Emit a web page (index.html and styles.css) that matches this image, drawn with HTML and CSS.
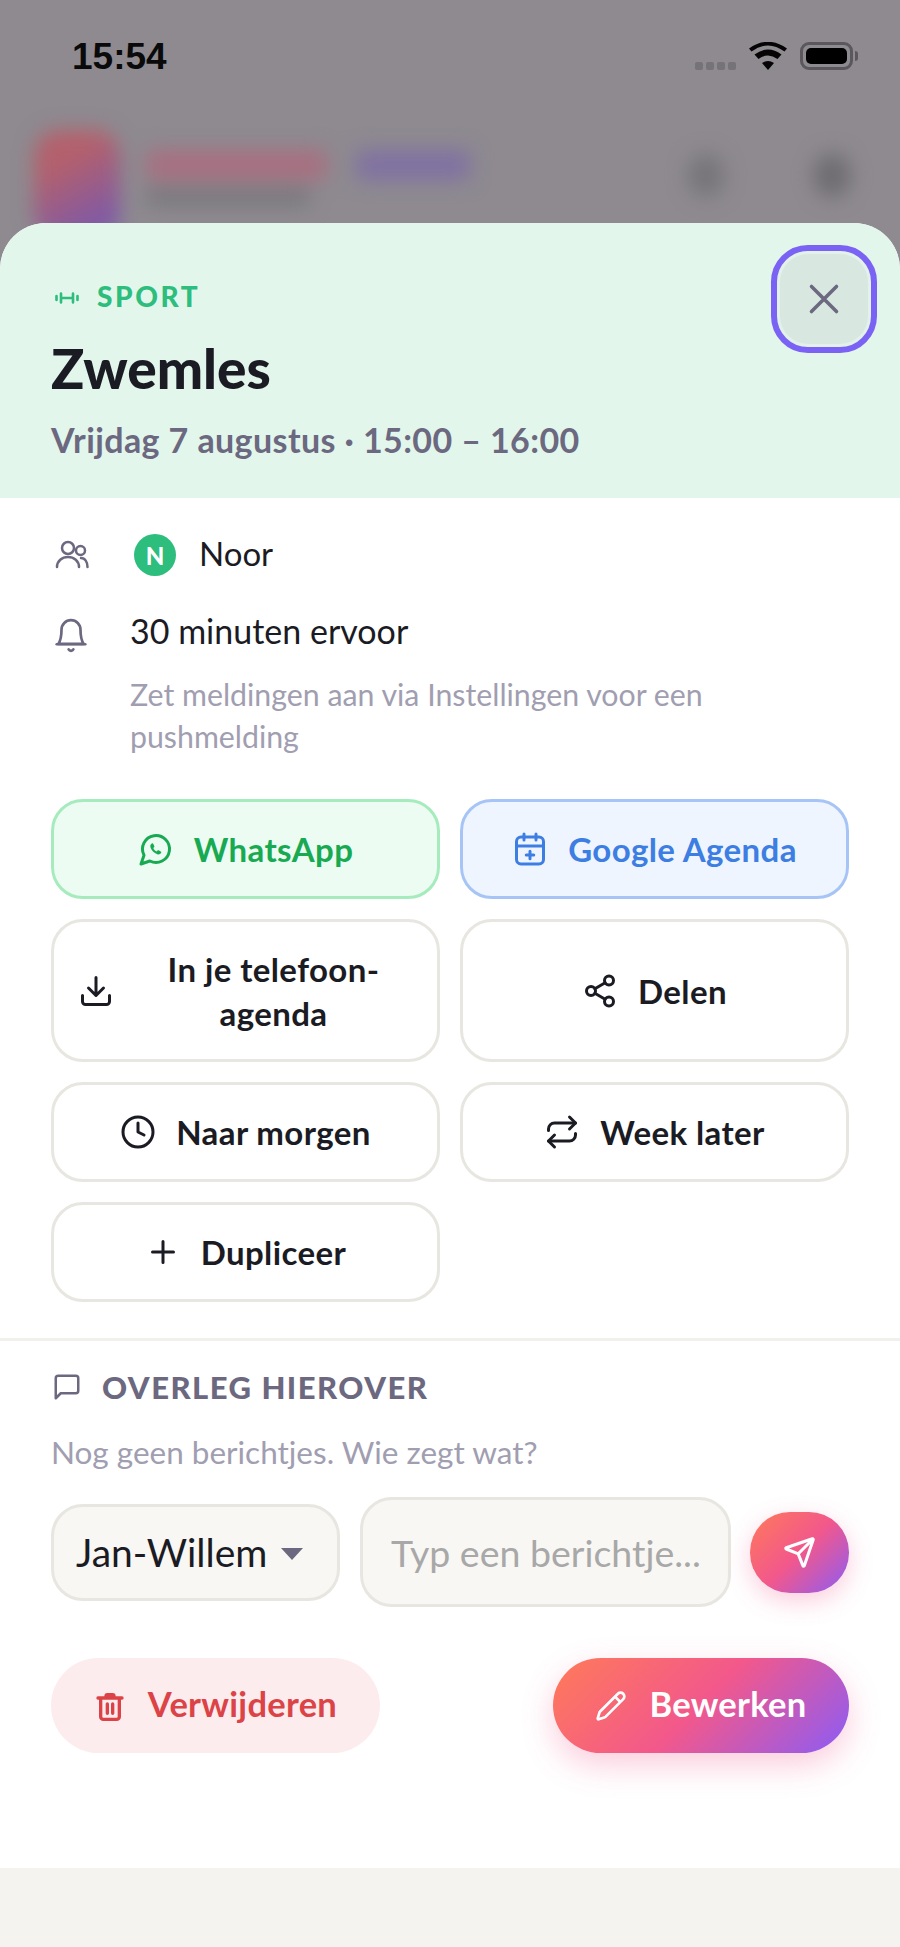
FILE: index.html
```html
<!DOCTYPE html>
<html lang="nl">
<head>
<meta charset="utf-8">
<title>Zwemles</title>
<link rel="stylesheet" href="styles.css">
</head>
<body>
<div class="backdrop">
  <div class="status">
    <span class="time">15:54</span>
    <div class="status-icons">
      <div class="dots"><i></i><i></i><i></i><i></i></div>
      <svg class="wifi" viewBox="0 0 38 28"><path d="M19 28l-6-7q6-4 12 0zM9.500 17l-4-4.500q13.500-10 27 0l-4 4.500q-9.500-7-19 0zM2.500 9.500L0 6.500Q19-7 38 6.500l-2.500 3Q19-2.500 2.500 9.500z"/></svg>
      <div class="battery"><div class="battery-fill"></div></div>
    </div>
  </div>
  <div class="blurred">
    <div class="logo"></div>
    <div class="brand">
      <div class="brand-name"><span class="bn-a"></span><span class="bn-b"></span></div>
      <div class="brand-sub"></div>
    </div>
    <div class="ghost g1"></div>
    <div class="ghost g2"></div>
  </div>
</div>
<main class="sheet">
  <header class="head">
    <div class="cat">
      <svg class="ic cat-ic" viewBox="0 0 24 12"><path d="M1.500 4v4M6 1.500v9M18 1.500v9M22.500 4v4M6 6h12"/></svg>
      <span>SPORT</span>
    </div>
    <h1>Zwemles</h1>
    <p class="when">Vrijdag 7 augustus · 15:00 – 16:00</p>
    <button class="close"><svg class="ic" viewBox="0 0 24 24"><path d="M18 6 6 18M6 6l12 12"/></svg></button>
  </header>
  <section class="info">
    <div class="row">
      <svg class="ic row-ic" viewBox="0 0 34 30"><circle cx="13" cy="8" r="6"/><circle cx="25.500" cy="10.500" r="4.500"/><path d="M2 27c0-6 5-10 11-10s11 4 11 10"/><path d="M26 18c4 0 6.500 4 6.500 9"/></svg>
      <span class="avatar">N</span>
      <span class="val">Noor</span>
    </div>
    <div class="row row-bell">
      <svg class="ic bell-ic" viewBox="0 0 24 24"><path d="M6 8a6 6 0 0 1 12 0c0 5.500 1 7.500 2 9H4c1-1.500 2-3.500 2-9"/><path d="M3 17.200h18"/><path d="M10.500 20.500a1.700 1.700 0 0 0 3 0"/></svg>
      <span class="val">30 minuten ervoor</span>
    </div>
    <p class="note">Zet meldingen aan via Instellingen voor een pushmelding</p>
  </section>
  <section class="grid">
    <button class="btn wa"><svg class="ic" viewBox="0 0 24 24"><path d="M7.900 20A9 9 0 1 0 4 16.100L2 22Z"/><path class="solid" d="M9 8.500c-.7.5-1 1.300-.7 2.300.6 2 2.400 3.900 4.600 4.700 1 .3 1.900 0 2.500-.8.300-.5.100-.9-.3-1.100l-1.300-.7c-.4-.2-.7-.1-.9.200l-.4.500c-.9-.3-1.900-1.200-2.300-2.300l.5-.5c.3-.3.3-.6.1-1l-.6-1.200c-.2-.5-.7-.5-1.200-.1z"/></svg><span>WhatsApp</span></button>
    <button class="btn ga"><svg class="ic" viewBox="0 0 24 24"><rect x="3" y="4" width="18" height="18" rx="3"/><path d="M16 2v4M8 2v4M3 10h18M12 13.500v5M9.500 16h5"/></svg><span>Google Agenda</span></button>
    <button class="btn tall"><svg class="ic" viewBox="0 0 24 24"><path d="M21 15v4a2 2 0 0 1-2 2H5a2 2 0 0 1-2-2v-4M7 10l5 5 5-5M12 15V3"/></svg><span class="wrap">In je telefoon-agenda</span></button>
    <button class="btn"><svg class="ic" viewBox="0 0 24 24"><circle cx="18" cy="5" r="3"/><circle cx="6" cy="12" r="3"/><circle cx="18" cy="19" r="3"/><path d="m8.590 13.510 6.830 3.980M15.410 6.510l-6.820 3.980"/></svg><span>Delen</span></button>
    <button class="btn"><svg class="ic" viewBox="0 0 24 24"><circle cx="12" cy="12" r="10"/><path d="M12 6v6l4 2"/></svg><span>Naar morgen</span></button>
    <button class="btn"><svg class="ic" viewBox="0 0 24 24"><path d="m17 2 4 4-4 4"/><path d="M3 11v-1a4 4 0 0 1 4-4h14"/><path d="m7 22-4-4 4-4"/><path d="M21 13v1a4 4 0 0 1-4 4H3"/></svg><span>Week later</span></button>
    <button class="btn"><svg class="ic" viewBox="0 0 24 24"><path d="M5 12h14M12 5v14"/></svg><span>Dupliceer</span></button>
  </section>
  <section class="chat">
    <h2><svg class="ic" viewBox="0 0 24 24"><path d="M21 15a2 2 0 0 1-2 2H7l-4 4V5a2 2 0 0 1 2-2h14a2 2 0 0 1 2 2z"/></svg>OVERLEG HIEROVER</h2>
    <p class="empty">Nog geen berichtjes. Wie zegt wat?</p>
    <div class="compose">
      <div class="select"><span>Jan-Willem</span><i class="caret"></i></div>
      <div class="input">Typ een berichtje...</div>
      <button class="send"><svg class="ic" viewBox="0 0 24 24"><path d="M14.536 21.686a.5.5 0 0 0 .937-.024l6.500-19a.496.496 0 0 0-.635-.635l-19 6.500a.5.5 0 0 0-.024.937l7.930 3.180a2 2 0 0 1 1.112 1.110zM21.854 2.147l-10.940 10.939"/></svg></button>
    </div>
  </section>
  <section class="actions">
    <button class="pill del"><svg class="ic" viewBox="0 0 24 24"><path d="M3 6h18M19 6v14a2 2 0 0 1-2 2H7a2 2 0 0 1-2-2V6M9 6V4.500a1 1 0 0 1 1-1h4a1 1 0 0 1 1 1V6M10 10.500v7M14 10.500v7"/></svg><span>Verwijderen</span></button>
    <button class="pill edit"><svg class="ic" viewBox="0 0 24 24"><path d="M21.174 6.812a1 1 0 0 0-3.986-3.987L3.842 16.174a2 2 0 0 0-.5.830l-1.321 4.352a.5.5 0 0 0 .623.622l4.353-1.320a2 2 0 0 0 .830-.497zM15 5l4 4"/></svg><span>Bewerken</span></button>
  </section>
</main>
<div class="foot"></div>
</body>
</html>
```
FILE: styles.css
```css
* { box-sizing: border-box; }
html, body { margin: 0; padding: 0; }
body {
  width: 900px;
  height: 1947px;
  overflow: hidden;
  display: flex;
  flex-direction: column;
  background: #f5f3ef;
  font-family: "Lato", "Liberation Sans", sans-serif;
  color: #1b1b24;
}
p, h1, h2 { margin: 0; }
button { font: inherit; color: inherit; background: none; border: 0; padding: 0; }
.ic {
  fill: none;
  stroke: currentColor;
  stroke-width: 2;
  stroke-linecap: round;
  stroke-linejoin: round;
  flex: none;
}
.ic .solid { fill: currentColor; stroke: none; }

/* dimmed, blurred page behind the sheet */
.backdrop {
  height: 273px;
  margin-bottom: -50px;
  flex: none;
  background: #8e8a90;
  overflow: hidden;
  display: flex;
  flex-direction: column;
}
.status {
  height: 127px;
  flex: none;
  padding: 0 47px 0 72px;
  display: flex;
  justify-content: space-between;
  align-items: flex-start;
}
.time {
  margin-top: 37px;
  font: 700 37px/40px "Liberation Sans", sans-serif;
  color: #0a0a0a;
}
.status-icons { display: flex; align-items: center; gap: 13px; margin-top: 42px; }
.dots { display: flex; gap: 3px; margin-top: 20px; }
.dots i { width: 8px; height: 8px; border-radius: 2px; background: #757278; }
.wifi { width: 38px; height: 28px; fill: #050505; }
.battery {
  width: 53px;
  height: 28px;
  border: 3px solid #5a585c;
  border-radius: 9px;
  padding: 3px;
  position: relative;
}
.battery::after {
  content: "";
  position: absolute;
  right: -8px;
  top: 6px;
  width: 3px;
  height: 10px;
  border-radius: 0 3px 3px 0;
  background: #5a585c;
}
.battery-fill { height: 100%; border-radius: 5px; background: #000; }
.blurred {
  display: flex;
  align-items: flex-start;
  padding: 3px 50px 0 34px;
  filter: blur(10px);
  height: 110px;
}
.logo {
  width: 86px;
  height: 110px;
  border-radius: 26px;
  background: linear-gradient(150deg, #b4606c 30%, #7d59a8 85%);
}
.brand { margin: 20px 0 0 26px; }
.brand-name { display: flex; gap: 29px; }
.bn-a { width: 181px; height: 30px; border-radius: 6px; background: #a86f80; }
.bn-b { width: 114px; height: 30px; border-radius: 6px; background: #8071a2; }
.brand-sub { margin-top: 8px; width: 164px; height: 18px; border-radius: 4px; background: #79777c; }
.ghost { width: 36px; height: 43px; border-radius: 18px; margin-top: 24px; background: #77747a; }
.g1 { margin-left: auto; }
.g2 { margin-left: 90px; background: #6e6b71; }

/* sheet */
.sheet {
  position: relative;
  height: 1645px;
  flex: none;
  background: #fff;
  border-radius: 46px 46px 0 0;
  overflow: hidden;
}
.head {
  position: relative;
  height: 275px;
  background: #e2f6ec;
  padding: 56px 51px 0;
}
.cat {
  display: flex;
  align-items: center;
  gap: 18px;
  height: 34px;
  color: #2dbd7c;
  font-size: 28px;
  font-weight: 900;
  letter-spacing: 2.600px;
}
.cat-ic { width: 24px; height: 12px; margin: 3px 0 0 4px; stroke-width: 2.600; }
h1 {
  margin-top: 25px;
  font-size: 55px;
  line-height: 60px;
  font-weight: 900;
  color: #1b1b24;
}
.when {
  margin-top: 21px;
  font-size: 34px;
  line-height: 42px;
  letter-spacing: .4px;
  font-weight: 700;
  color: #6b6880;
}
.close {
  position: absolute;
  top: 22px;
  right: 23px;
  width: 106px;
  height: 108px;
  border-radius: 37px;
  background: #d8e8e0;
  border: 6px solid #7a62f5;
  box-shadow: inset 0 0 0 3px #e2f2ea;
  color: #6b6880;
  display: flex;
  align-items: center;
  justify-content: center;
}
.close .ic { width: 50px; height: 50px; stroke-width: 1.700; }

.info { padding: 36px 51px 0; }
.row { display: flex; align-items: center; height: 42px; font-size: 33px; }
.val { padding-bottom: 5px; }
.row-ic { width: 34px; height: 30px; margin-left: 4px; color: #6b6880; stroke-width: 2.500; }
.bell-ic { width: 38px; height: 38px; margin: 6px 0 0 1px; color: #6b6880; stroke-width: 1.700; }
.avatar {
  width: 42px;
  height: 42px;
  margin: 0 23px 0 45px;
  border-radius: 50%;
  background: #2dbd7c;
  color: #fff;
  font-size: 24px;
  font-weight: 900;
  display: flex;
  align-items: center;
  justify-content: center;
}
.row-bell { margin-top: 36px; font-size: 34px; }
.row-bell .val { margin-left: 40px; }
.note {
  margin: 20px 0 0 79px;
  font-size: 30.300px;
  line-height: 41.600px;
  color: #a09eb0;
}

.grid {
  margin-top: 42px;
  padding: 0 51px;
  display: grid;
  grid-template-columns: 1fr 1fr;
  gap: 20px;
}
.btn {
  min-height: 100px;
  padding: 0 24px;
  border: 3px solid #e8e6e0;
  border-radius: 32px;
  background: #fff;
  display: flex;
  align-items: center;
  justify-content: center;
  gap: 20px;
  font-size: 33px;
  line-height: 44px;
  font-weight: 700;
  letter-spacing: .4px;
  color: #1b1b24;
}
.btn .ic { width: 36px; height: 36px; }
.tall { min-height: 143px; }
.wrap { flex: 1; text-align: center; padding: 0 14px; }
.wa { background: #edfcf2; border-color: #a5ebbd; color: #18aa52; }
.ga { background: #eff5ff; border-color: #a6c5f6; color: #3d7ee2; }

.chat {
  margin-top: 36px;
  border-top: 3px solid #f1f0ec;
  padding: 28px 51px 0;
}
h2 {
  display: flex;
  align-items: center;
  gap: 20px;
  height: 36px;
  font-size: 31px;
  font-weight: 900;
  letter-spacing: 1.500px;
  color: #6b6880;
}
h2 .ic { width: 30px; height: 30px; margin-left: 1px; stroke-width: 2; }
.empty {
  margin-top: 29px;
  font-size: 31.500px;
  line-height: 36px;
  color: #a09eb0;
}
.compose { margin-top: 27px; display: flex; align-items: center; gap: 20px; }
.select {
  width: 289px;
  height: 97px;
  flex: none;
  padding: 0 22px;
  border: 3px solid #e8e6e0;
  border-radius: 32px;
  background: #f8f7f4;
  display: flex;
  align-items: center;
  gap: 14px;
  font-size: 39px;
  white-space: nowrap;
}
.caret {
  width: 0;
  height: 0;
  margin-top: 4px;
  border-left: 11px solid transparent;
  border-right: 11px solid transparent;
  border-top: 12px solid #6b6880;
}
.input {
  width: 371px;
  height: 110px;
  flex: none;
  padding: 0 28px;
  border: 3px solid #e8e6e0;
  border-radius: 32px;
  background: #f8f7f4;
  display: flex;
  align-items: center;
  font-size: 37.500px;
  color: #a8a8a8;
  white-space: nowrap;
  overflow: hidden;
}
.send {
  width: 99px;
  height: 81px;
  flex: none;
  margin-left: -1px;
  border-radius: 40px;
  background: linear-gradient(135deg, #ff7a59, #f2588c 50%, #8b5cf6);
  box-shadow: 0 8px 24px rgba(242, 88, 140, .3);
  color: #fff;
  display: flex;
  align-items: center;
  justify-content: center;
}
.send .ic { width: 33px; height: 33px; stroke-width: 2.200; }

.actions {
  margin-top: 51px;
  padding: 0 51px;
  display: flex;
  justify-content: space-between;
}
.pill {
  height: 95px;
  border-radius: 48px;
  display: flex;
  align-items: center;
  justify-content: center;
  gap: 22px;
  font-size: 34.500px;
  font-weight: 700;
  letter-spacing: .3px;
}
.pill span { padding-bottom: 4px; }
.pill .ic { width: 32px; height: 32px; }
.del { width: 329px; background: #fdecee; color: #dc4347; }
.del .ic { stroke-width: 2.500; }
.edit {
  width: 296px;
  background: linear-gradient(135deg, #ff7a59, #f2588c 50%, #8b5cf6);
  box-shadow: 0 12px 32px rgba(242, 88, 140, .3);
  color: #fff;
}
.foot { flex: 1; background: #f5f3ef; }
```
